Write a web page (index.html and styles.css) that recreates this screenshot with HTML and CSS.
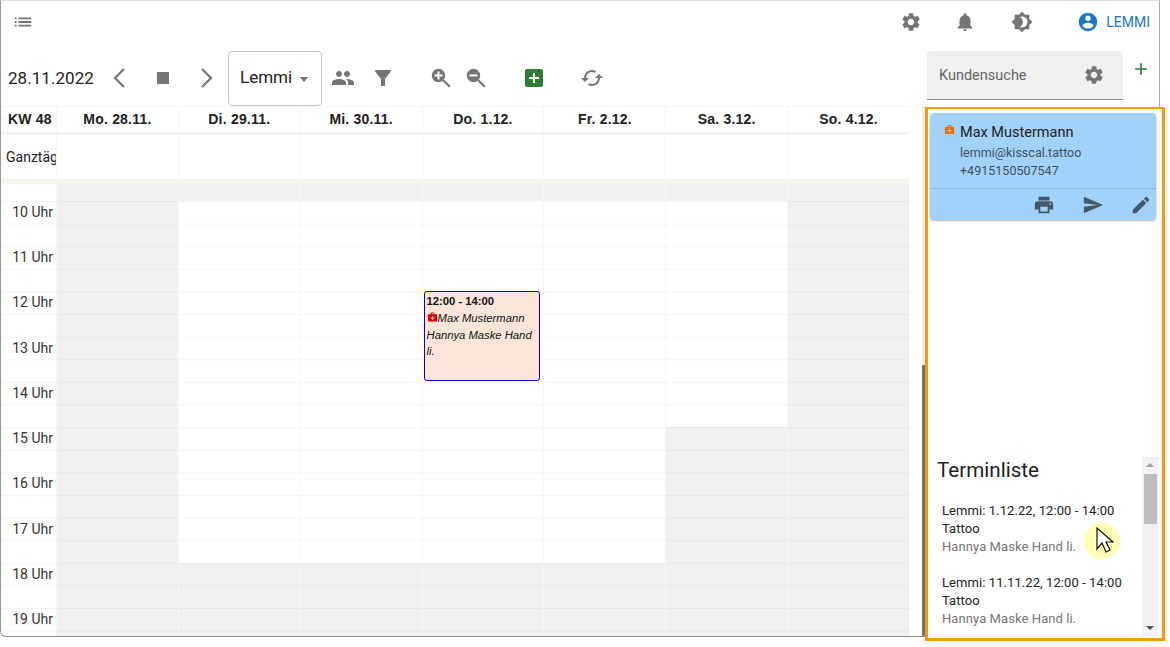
FILE: index.html
```html
<!DOCTYPE html>
<html lang="de">
<head>
<meta charset="utf-8">
<title>Kalender</title>
<link rel="stylesheet" href="styles.css">
</head>
<body>
<svg class="defs" aria-hidden="true">
  <symbol id="i-list" viewBox="0 0 24 24"><path d="M3 13h2v-2H3v2zm0 4h2v-2H3v2zm0-8h2V7H3v2zm4 4h14v-2H7v2zm0 4h14v-2H7v2zM7 7v2h14V7H7z"/></symbol>
  <symbol id="i-gear" viewBox="0 0 24 24"><path d="M19.14 12.94c.04-.3.06-.61.06-.94 0-.32-.02-.64-.07-.94l2.03-1.58c.18-.14.23-.41.12-.61l-1.92-3.32c-.12-.22-.37-.29-.59-.22l-2.39.96c-.5-.38-1.03-.7-1.62-.94l-.36-2.54c-.04-.24-.24-.41-.48-.41h-3.84c-.24 0-.43.17-.47.41l-.36 2.54c-.59.24-1.13.57-1.62.94l-2.39-.96c-.22-.08-.47 0-.59.22L2.74 8.87c-.12.21-.08.47.12.61l2.03 1.58c-.05.3-.09.63-.09.94s.02.64.07.94l-2.03 1.58c-.18.14-.23.41-.12.61l1.92 3.32c.12.22.37.29.59.22l2.39-.96c.5.38 1.03.7 1.62.94l.36 2.54c.05.24.24.41.48.41h3.84c.24 0 .44-.17.47-.41l.36-2.54c.59-.24 1.13-.56 1.62-.94l2.39.96c.22.08.47 0 .59-.22l1.92-3.32c.12-.22.07-.47-.12-.61l-2.01-1.58zM12 15.6c-1.98 0-3.6-1.62-3.6-3.6s1.62-3.6 3.6-3.6 3.6 1.62 3.6 3.6-1.62 3.6-3.6 3.6z"/></symbol>
  <symbol id="i-bell" viewBox="0 0 24 24"><path d="M12 22c1.1 0 2-.9 2-2h-4c0 1.1.89 2 2 2zm6-6v-5c0-3.07-1.64-5.64-4.5-6.32V4c0-.83-.67-1.5-1.5-1.5s-1.5.67-1.5 1.5v.68C7.63 5.36 6 7.92 6 11v5l-2 2v1h16v-1l-2-2z"/></symbol>
  <symbol id="i-bright" viewBox="0 0 24 24"><path d="M20 8.69V4h-4.69L12 .69 8.69 4H4v4.69L.69 12 4 15.31V20h4.69L12 23.31 15.31 20H20v-4.69L23.31 12 20 8.69zM12 18c-.89 0-1.74-.2-2.5-.55C11.56 16.5 13 14.42 13 12s-1.44-4.5-3.5-5.45C10.26 6.2 11.11 6 12 6c3.31 0 6 2.69 6 6s-2.69 6-6 6z"/></symbol>
  <symbol id="i-account" viewBox="0 0 24 24"><path d="M12 2C6.48 2 2 6.48 2 12s4.48 10 10 10 10-4.48 10-10S17.52 2 12 2zm0 3c1.66 0 3 1.34 3 3s-1.34 3-3 3-3-1.34-3-3 1.34-3 3-3zm0 14.2c-2.5 0-4.71-1.28-6-3.22.03-1.99 4-3.08 6-3.08 1.99 0 5.97 1.09 6 3.08-1.29 1.94-3.5 3.22-6 3.22z"/></symbol>
  <symbol id="i-people" viewBox="0 0 24 24"><path d="M16 11c1.66 0 2.99-1.34 2.99-3S17.66 5 16 5c-1.66 0-3 1.34-3 3s1.34 3 3 3zm-8 0c1.66 0 2.99-1.34 2.99-3S9.66 5 8 5C6.34 5 5 6.34 5 8s1.34 3 3 3zm0 2c-2.33 0-7 1.17-7 3.5V19h14v-2.5c0-2.33-4.67-3.5-7-3.5zm8 0c-.29 0-.62.02-.97.05 1.16.84 1.97 1.97 1.97 3.45V19h6v-2.5c0-2.33-4.67-3.5-7-3.5z"/></symbol>
  <symbol id="i-filter" viewBox="0 0 24 24"><path d="M4.25 5.61C6.27 8.2 10 13 10 13v6c0 .55.45 1 1 1h2c.55 0 1-.45 1-1v-6s3.72-4.8 5.74-7.39c.51-.66.04-1.61-.79-1.61H5.04c-.83 0-1.3.95-.79 1.61z"/></symbol>
  <symbol id="i-zoomin" viewBox="0 0 24 24"><circle cx="9.500" cy="9.500" r="6.700"/><path d="M13.500 15l1.500-1.500 6.500 6.500-1.500 1.500z"/><path fill="#fff" d="M8.500 5.500h2v3h3v2h-3v3h-2v-3h-3v-2h3z"/></symbol>
  <symbol id="i-zoomout" viewBox="0 0 24 24"><circle cx="9.500" cy="9.500" r="6.700"/><path d="M13.500 15l1.500-1.500 6.500 6.500-1.500 1.500z"/><path fill="#fff" d="M5.500 8.500h8v2h-8z"/></symbol>
  <symbol id="i-addbox" viewBox="0 0 24 24"><path d="M19 3H5c-1.11 0-2 .9-2 2v14c0 1.1.89 2 2 2h14c1.1 0 2-.9 2-2V5c0-1.1-.9-2-2-2zm-2 10h-4v4h-2v-4H7v-2h4V7h2v4h4v2z"/></symbol>
  <symbol id="i-cached" viewBox="0 0 24 24"><path d="M19 8l-4 4h3c0 3.31-2.69 6-6 6-1.01 0-1.97-.25-2.8-.7l-1.46 1.46C8.97 19.54 10.43 20 12 20c4.42 0 8-3.58 8-8h3l-4-4zM6 12c0-3.31 2.69-6 6-6 1.01 0 1.97.25 2.8.7l1.46-1.46C15.03 4.46 13.57 4 12 4c-4.42 0-8 3.58-8 8H1l4 4 4-4H6z"/></symbol>
  <symbol id="i-med" viewBox="0 0 24 24"><path d="M20 6h-4V4c0-1.1-.9-2-2-2h-4c-1.1 0-2 .9-2 2v2H4c-1.1 0-2 .9-2 2v12c0 1.1.9 2 2 2h16c1.1 0 2-.9 2-2V8c0-1.1-.9-2-2-2zM10 4h4v2h-4V4zm6 11h-3v3h-2v-3H8v-2h3v-3h2v3h3v2z"/></symbol>
  <symbol id="i-print" viewBox="0 0 24 24"><path d="M19 8H5c-1.66 0-3 1.34-3 3v6h4v4h12v-4h4v-6c0-1.66-1.34-3-3-3zm-3 11H8v-5h8v5zm3-7c-.55 0-1-.45-1-1s.45-1 1-1 1 .45 1 1-.45 1-1 1zm-1-9H6v4h12V3z"/></symbol>
  <symbol id="i-send" viewBox="0 0 24 24"><path d="M2.010 21L23 12 2.010 3 2 10l15 2-15 2z"/></symbol>
  <symbol id="i-edit" viewBox="0 0 24 24"><path d="M3 17.25V21h3.75L17.81 9.94l-3.750-3.750L3 17.25zM20.710 7.040c.39-.39.39-1.020 0-1.410l-2.340-2.340c-.39-.39-1.020-.39-1.410 0l-1.830 1.830 3.750 3.750 1.830-1.830z"/></symbol>
  <symbol id="i-plus" viewBox="0 0 24 24"><path d="M19 13h-6v6h-2v-6H5v-2h6V5h2v6h6v2z"/></symbol>
</svg>

<div class="app">
  <header class="topbar">
    <svg class="ico ico-list"><use href="#i-list"/></svg>
    <div class="top-actions">
      <svg class="ico ico-top"><use href="#i-gear"/></svg>
      <svg class="ico ico-top"><use href="#i-bell"/></svg>
      <svg class="ico ico-top"><use href="#i-bright"/></svg>
      <div class="user">
        <svg class="ico ico-user"><use href="#i-account"/></svg>
        <span>LEMMI</span>
      </div>
    </div>
  </header>

  <div class="content">
    <main class="left">
      <div class="toolbar">
        <span class="date">28.11.2022</span>
        <svg class="nav nav-prev" viewBox="0 0 16 24"><path d="M12 3 3 12l9 9"/></svg>
        <span class="stop"></span>
        <svg class="nav nav-next" viewBox="0 0 16 24"><path d="M4 3l9 9-9 9"/></svg>
        <div class="select"><span>Lemmi</span><i class="caret"></i></div>
        <svg class="ico ico-tool ico-people"><use href="#i-people"/></svg>
        <svg class="ico ico-tool ico-filter"><use href="#i-filter"/></svg>
        <svg class="ico ico-tool ico-zin"><use href="#i-zoomin"/></svg>
        <svg class="ico ico-tool ico-zout"><use href="#i-zoomout"/></svg>
        <svg class="ico ico-tool ico-add"><use href="#i-addbox"/></svg>
        <svg class="ico ico-tool ico-sync"><use href="#i-cached"/></svg>
      </div>

      <div class="calendar">
        <div class="cal-main">
          <div class="cal-row head">
            <div class="cell kw">KW 48</div>
            <div class="cell">Mo. 28.11.</div>
            <div class="cell">Di. 29.11.</div>
            <div class="cell">Mi. 30.11.</div>
            <div class="cell">Do. 1.12.</div>
            <div class="cell">Fr. 2.12.</div>
            <div class="cell">Sa. 3.12.</div>
            <div class="cell">So. 4.12.</div>
          </div>
          <div class="cal-row allday">
            <div class="cell lbl">Ganztägig</div>
            <div class="cell"></div><div class="cell"></div><div class="cell"></div><div class="cell"></div><div class="cell"></div><div class="cell"></div><div class="cell"></div>
          </div>
          <div class="cal-row body">
            <div class="col times">
              <div class="times-top"></div>
              <div class="hour">10 Uhr</div>
              <div class="hour">11 Uhr</div>
              <div class="hour">12 Uhr</div>
              <div class="hour">13 Uhr</div>
              <div class="hour">14 Uhr</div>
              <div class="hour">15 Uhr</div>
              <div class="hour">16 Uhr</div>
              <div class="hour">17 Uhr</div>
              <div class="hour">18 Uhr</div>
              <div class="hour">19 Uhr</div>
            </div>
            <div class="col"><div class="seg off fill"></div></div>
            <div class="col"><div class="seg off top"></div><div class="seg open-work"></div><div class="seg off fill"></div></div>
            <div class="col"><div class="seg off top"></div><div class="seg open-work"></div><div class="seg off fill"></div></div>
            <div class="col has-event">
              <div class="seg off top"></div><div class="seg open-work"></div><div class="seg off fill"></div>
              <div class="event">
                <div class="ev-time">12:00 - 14:00</div>
                <div class="ev-text"><svg class="ev-ico"><use href="#i-med"/></svg>Max Mustermann Hannya Maske Hand li.</div>
              </div>
            </div>
            <div class="col"><div class="seg off top"></div><div class="seg open-work"></div><div class="seg off fill"></div></div>
            <div class="col"><div class="seg off top"></div><div class="seg open-sat"></div><div class="seg off fill"></div></div>
            <div class="col"><div class="seg off fill"></div></div>
          </div>
        </div>
        <div class="cal-scroll"><div class="cal-thumb"></div></div>
      </div>
    </main>

    <div class="right">
      <div class="search-row">
        <div class="search">
          <span>Kundensuche</span>
          <svg class="ico ico-top"><use href="#i-gear"/></svg>
        </div>
        <svg class="ico ico-plus"><use href="#i-plus"/></svg>
      </div>
      <aside class="panel">
        <section class="card">
          <div class="card-info">
            <svg class="ico ico-med"><use href="#i-med"/></svg>
            <div>
              <div class="card-name">Max Mustermann</div>
              <div class="card-sub">lemmi@kisscal.tattoo</div>
              <div class="card-sub">+4915150507547</div>
            </div>
          </div>
          <div class="card-actions">
            <svg class="ico ico-card"><use href="#i-print"/></svg>
            <svg class="ico ico-card"><use href="#i-send"/></svg>
            <svg class="ico ico-card"><use href="#i-edit"/></svg>
          </div>
        </section>
        <section class="list">
          <div class="list-body">
            <h2>Terminliste</h2>
            <div class="appt">
              <div>Lemmi: 1.12.22, 12:00 - 14:00</div>
              <div>Tattoo</div>
              <div class="muted">Hannya Maske Hand li.</div>
            </div>
            <div class="appt">
              <div>Lemmi: 11.11.22, 12:00 - 14:00</div>
              <div>Tattoo</div>
              <div class="muted">Hannya Maske Hand li.</div>
            </div>
          </div>
          <div class="list-scroll">
            <i class="arrow up"></i>
            <div class="list-thumb"></div>
            <i class="arrow down"></i>
          </div>
        </section>
      </aside>
    </div>
  </div>

  <div class="pointer">
    <svg viewBox="0 0 20 30"><path d="M3 3v21l5-6 4 9 4-2-4-8h7z"/></svg>
  </div>
</div>
</body>
</html>
```

FILE: styles.css
```css
* { box-sizing: border-box; }
html, body { margin: 0; padding: 0; background: #fff; }
body {
  width: 1170px;
  height: 647px;
  overflow: hidden;
  font-family: Roboto, "Liberation Sans", sans-serif;
  color: #212121;
}
.defs { display: none; }
.ico { display: block; fill: #757575; flex: none; }

.app {
  position: relative;
  width: 1160px;
  height: 637px;
  border-top: 1px solid #dcdcdc;
  border-left: 1px solid #999;
  border-right: 1px solid #aaa;
  border-bottom: 1px solid #8f8f8f;
  border-radius: 0 0 6px 6px;
  display: flex;
  flex-direction: column;
}

/* top bar */
.topbar {
  height: 50px;
  flex: none;
  display: flex;
  align-items: flex-start;
  justify-content: space-between;
  padding: 10px 9px 0 11px;
}
.ico-list { width: 22px; height: 22px; }
.top-actions { display: flex; align-items: center; height: 22px; }
.ico-top { width: 22px; height: 22px; }
.top-actions .ico-top { margin-right: 32px; }
.top-actions .ico-top:nth-child(2) { margin-right: 35px; }
.top-actions .ico-top:nth-child(3) { margin-right: 44px; }
.user { display: flex; align-items: center; gap: 7px; color: #1976d2; font-size: 14px; }
.ico-user { width: 22px; height: 22px; fill: #1976d2; }

/* content */
.content { flex: 1; display: flex; min-height: 0; }
.left { width: 926px; flex: none; display: flex; flex-direction: column; min-height: 0; }
.toolbar { height: 55px; flex: none; display: flex; align-items: center; padding: 0 0 1px 7px; }
.date { font-size: 17px; width: 86px; letter-spacing: .05px; }
.nav { width: 16px; height: 24px; fill: none; stroke: #757575; stroke-width: 2.200; }
.nav-prev { margin-left: 18px; }
.stop { width: 12px; height: 12px; background: #757575; margin-left: 29px; }
.nav-next { margin-left: 29px; }
.select {
  width: 94px;
  height: 55px;
  margin-left: 14px;
  align-self: flex-start;
  border: 1px solid #c4c4c4;
  border-radius: 4px;
  display: flex;
  align-items: center;
  padding: 0 13px 3px 11px;
  font-size: 17px;
  justify-content: space-between;
}
.caret { width: 0; height: 0; border: 4.500px solid transparent; border-top: 5px solid #757575; border-bottom: 0; margin-top: 4px; }
.ico-tool { width: 24px; height: 24px; }
.ico-people { margin-left: 9px; }
.ico-filter { margin-left: 16px; }
.ico-zin { margin-left: 34px; }
.ico-zout { margin-left: 11px; }
.ico-add { margin-left: 34px; fill: #2e7d32; }
.ico-sync { margin-left: 34px; }

/* calendar */
.calendar { flex: 1; display: flex; min-height: 0; }
.cal-main { width: 908px; flex: none; display: flex; flex-direction: column; overflow: hidden; min-height: 0; }
.cal-row { display: grid; grid-template-columns: 56px repeat(7, 121.86px); flex: none; }
.cell { border-right: 1px solid #f5f5f5; display: flex; align-items: center; justify-content: center; overflow: hidden; white-space: nowrap; }
.head {
  height: 29px;
  border-top: 1px solid #f5f5f5;
  border-bottom: 3px solid #f5f5f0;
  padding-bottom: 1px;
  font: bold 14px "Liberation Sans", Arial, sans-serif;
  letter-spacing: .2px;
}
.head .kw { justify-content: flex-start; padding-left: 7px; }
.allday { height: 49px; border-bottom: 5px solid #f5f5f0; font-size: 14px; }
.lbl { justify-content: flex-start; padding-left: 5px; }
.body { flex: 1; min-height: 0; }
.col {
  border-right: 1px solid #f7f7f7;
  display: flex;
  flex-direction: column;
  background-image: linear-gradient(#f5f5f5 1px, transparent 1px);
  background-size: 100% 22.610px;
  background-position: 0 17px;
  min-height: 0;
}
.seg.off { background: rgba(0, 0, 0, .055); }
.top { height: 17px; flex: none; }
.fill { flex: 1; }
.open-work { height: 362px; flex: none; }
.open-sat { height: 226px; flex: none; }
.times { overflow: hidden; font-size: 14px; color: #333; text-align: right; padding-right: 3px; }
.times-top { height: 17px; flex: none; }
.hour { height: 45.220px; flex: none; line-height: 22.610px; }

.has-event { position: relative; }
.event {
  position: absolute;
  top: 107px;
  left: 1px;
  width: 116px;
  height: 90px;
  background: #fbe5d8;
  border: 1px solid #0000e0;
  border-radius: 3px;
  padding: 1px 1px 0 2px;
  font: 11.250px/16.300px "Liberation Sans", Arial, sans-serif;
  color: #111;
}
.ev-time { font-weight: bold; margin-bottom: 1px; }
.ev-text { font-style: italic; }
.ev-ico { width: 11px; height: 12px; fill: #e00000; display: inline-block; vertical-align: -1px; }

.cal-scroll { width: 3px; margin-left: 13px; background: #eee; display: flex; flex-direction: column; min-height: 0; }
.cal-thumb { margin-top: 259px; flex: 1; background: #757575; }

/* right */
.right { flex: 1; min-width: 0; display: flex; flex-direction: column; min-height: 0; }
.search-row { height: 56px; flex: none; display: flex; align-items: flex-start; }
.search {
  width: 196px;
  height: 49px;
  background: #f0f0f0;
  border-bottom: 1px solid #8a8a8a;
  border-radius: 4px 4px 0 0;
  display: flex;
  align-items: center;
  justify-content: space-between;
  padding: 0 18px 0 12px;
  font-size: 14.500px;
  color: #666;
}
.ico-plus { width: 20px; height: 20px; fill: #2e7d32; margin: 8px 0 0 8px; }

.panel {
  width: 240px;
  height: 534px;
  margin-left: -2px;
  flex: none;
  border: solid #ff9800;
  border-width: 2px 3px 3px;
  background: #fff;
  display: flex;
  flex-direction: column;
  padding-top: 4px;
}
.card {
  width: 226px;
  height: 107px;
  margin-left: 2px;
  flex: none;
  background: #a1d2fa;
  border-radius: 4px;
  box-shadow: 0 1px 2px rgba(0, 0, 0, .3);
  display: flex;
  flex-direction: column;
}
.card-info { height: 76px; flex: none; display: flex; padding: 9px 0 0 14px; gap: 5px; border-bottom: 1px solid #85b8e0; }
.ico-med { width: 11px; height: 11px; fill: #ef6c00; margin-top: 2px; }
.card-name { font-size: 14.500px; line-height: 21px; margin-bottom: 1px; }
.card-sub { font-size: 12.500px; line-height: 18px; color: #454f58; letter-spacing: .02px; }
.card-actions { flex: 1; display: flex; align-items: center; justify-content: flex-end; gap: 26.500px; padding-right: 4px; }
.ico-card { width: 22px; height: 22px; fill: #455a64; }

.list { margin-top: auto; height: 179px; flex: none; display: flex; margin-bottom: 2px; }
.list-body { width: 214px; flex: none; overflow: hidden; padding-left: 9px; }
.list-body h2 { margin: 0 0 19px; font-size: 20.600px; font-weight: 400; line-height: 26px; }
.appt { font-size: 13px; line-height: 18px; padding-left: 5px; margin-bottom: 18px; letter-spacing: .08px; white-space: nowrap; }
.muted { color: #757575; }
.list-scroll { width: 16px; background: #f1f1f1; display: flex; flex-direction: column; align-items: center; justify-content: flex-start; }
.list-thumb { width: 13px; height: 50px; background: #bdbdbd; flex: none; }
.arrow { width: 0; height: 0; border: 4px solid transparent; flex: none; }
.arrow.up { border-bottom: 4px solid #a0a0a0; border-top: 0; margin: 6px 0 7px; }
.arrow.down { border-top: 4px solid #505050; border-bottom: 0; margin-top: auto; margin-bottom: 6px; }

/* pointer highlight */
.pointer {
  position: absolute;
  left: 1083px;
  top: 522px;
  width: 36px;
  height: 36px;
  border-radius: 50%;
  background: #ffffb3;
}
.pointer svg { position: absolute; left: 10px; top: 2px; width: 20px; height: 30px; fill: #fff; stroke: #111; stroke-width: 1.200; }
```
